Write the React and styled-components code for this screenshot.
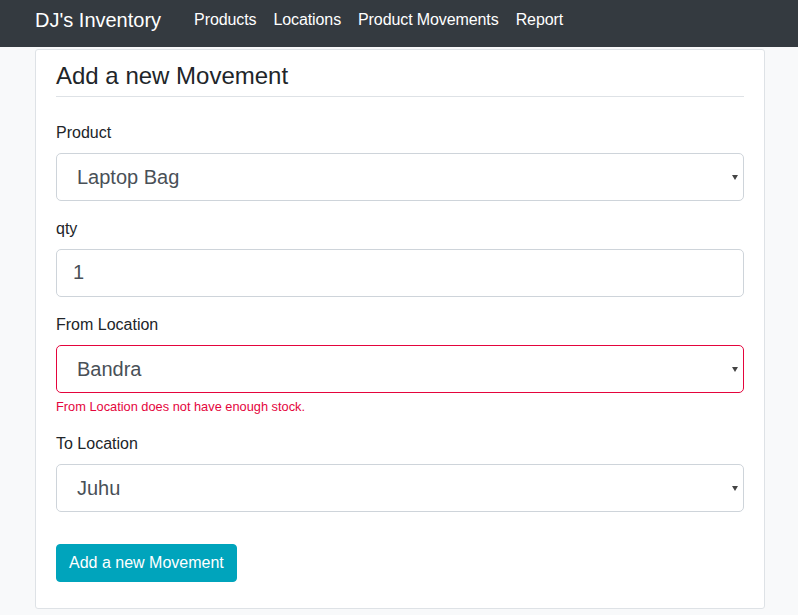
import React from 'react';
import styled, { createGlobalStyle } from 'styled-components';

const GlobalStyle = createGlobalStyle`
  * { box-sizing: border-box; }
  body {
    margin: 0;
    background: #f8f9fa;
    font-family: "Liberation Sans", Arial, sans-serif;
    font-size: 16px;
    line-height: 1.5;
    color: #212529;
  }
`;

const Navbar = styled.nav`
  height: 47px;
  background: #343a40;
  display: flex;
  align-items: center;
  padding: 0 35px 8px;
`;

const Brand = styled.a`
  color: #fff;
  font-size: 20px;
  margin-right: 25px;
  text-decoration: none;
  white-space: nowrap;
`;

const NavLinks = styled.div`
  display: flex;
  gap: 1px;
`;

const NavLink = styled.a`
  color: #fff;
  padding: 0 8px;
  letter-spacing: -0.1px;
  text-decoration: none;
  white-space: nowrap;
`;

const Container = styled.main`
  padding: 2px 33px 0 35px;
`;

const Card = styled.div`
  background: #fff;
  border: 1px solid #dee2e6;
  border-radius: 3px;
  padding: 12px 20px 26px;
`;

const Heading = styled.h2`
  margin: 0 0 24px;
  padding-bottom: 5px;
  font-size: 24px;
  font-weight: 400;
  line-height: 1.2;
  border-bottom: 1px solid #dee2e6;
`;

const Group = styled.div`
  margin-bottom: 16px;
`;

const Label = styled.label`
  display: block;
  margin-bottom: 8px;
`;

const fieldStyle = `
  display: block;
  width: 100%;
  height: 48px;
  padding: 0 20px;
  font-family: inherit;
  font-size: 20px;
  color: #495057;
  background: #fff;
  border-radius: 5px;
  outline: none;
`;

const Input = styled.input`
  ${fieldStyle}
  border: 1px solid #ced4da;
  padding-left: 16px;
`;

const SelectWrap = styled.div`
  position: relative;

  &::after {
    content: '';
    position: absolute;
    right: 6px;
    top: 50%;
    margin-top: -2px;
    border-left: 3.5px solid transparent;
    border-right: 3.5px solid transparent;
    border-top: 5px solid #444;
  }
`;

const Select = styled.select`
  ${fieldStyle}
  appearance: none;
  border: 1px solid ${p => (p.$invalid ? '#e4053d' : '#ced4da')};
`;

const Feedback = styled.div`
  margin-top: 4px;
  font-size: 12.8px;
  color: #e4053d;
`;

const Button = styled.button`
  margin-top: 16px;
  padding: 6px 12px;
  font-family: inherit;
  font-size: 16px;
  line-height: 1.5;
  color: #fff;
  background: #00a4bc;
  border: 1px solid #00a4bc;
  border-radius: 4px;
`;

const SelectField = ({ label, value, invalid, error }) => (
  <Group>
    <Label>{label}</Label>
    <SelectWrap>
      <Select $invalid={invalid} defaultValue={value}>
        <option>{value}</option>
      </Select>
    </SelectWrap>
    {error && <Feedback>{error}</Feedback>}
  </Group>
);

export default function App() {
  return (
    <>
      <GlobalStyle />
      <Navbar>
        <Brand href="#">DJ's Inventory</Brand>
        <NavLinks>
          <NavLink href="#">Products</NavLink>
          <NavLink href="#">Locations</NavLink>
          <NavLink href="#">Product Movements</NavLink>
          <NavLink href="#">Report</NavLink>
        </NavLinks>
      </Navbar>
      <Container>
        <Card>
          <Heading>Add a new Movement</Heading>
          <SelectField label="Product" value="Laptop Bag" />
          <Group>
            <Label>qty</Label>
            <Input defaultValue="1" />
          </Group>
          <SelectField
            label="From Location"
            value="Bandra"
            invalid
            error="From Location does not have enough stock."
          />
          <SelectField label="To Location" value="Juhu" />
          <Button>Add a new Movement</Button>
        </Card>
      </Container>
    </>
  );
}
